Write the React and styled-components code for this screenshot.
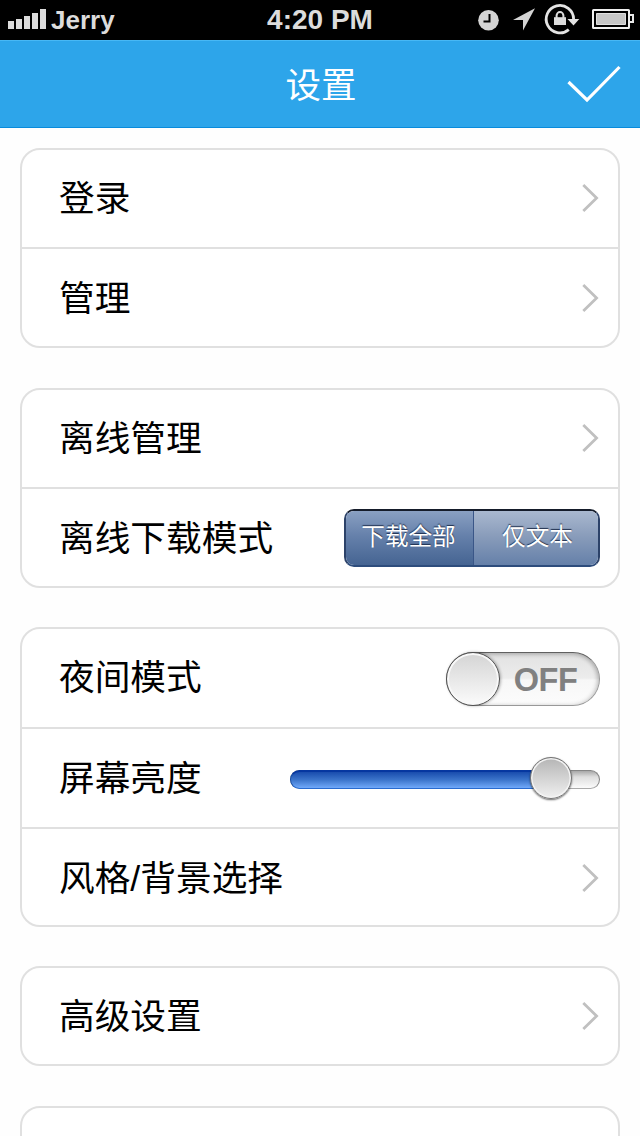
import { useState } from 'react';
import styled, { createGlobalStyle, css } from 'styled-components';

const GlobalStyle = createGlobalStyle`
  * {
    box-sizing: border-box;
  }

  body {
    margin: 0;
    background: #fefefe;
    overflow: hidden;
    font-family: 'Liberation Sans', 'Noto Sans CJK SC', sans-serif;
  }

  button {
    font-family: inherit;
  }
`;

const Screen = styled.div`
  width: 640px;
  height: 1136px;
  overflow: hidden;
  display: flex;
  flex-direction: column;
`;

const StatusBar = styled.div`
  flex: none;
  height: 40px;
  padding: 0 6px 0 8px;
  display: grid;
  grid-template-columns: 1fr auto 1fr;
  align-items: center;
  background: #000;
  color: #dcdcdc;
  font-size: 28px;
  font-weight: 700;
  line-height: 40px;
`;

const Carrier = styled.div`
  display: flex;
  align-items: center;
  gap: 5px;
  font-size: 26px;
`;

const Clock = styled.span`
  margin-left: -2px;
`;

const StatusIcons = styled.div`
  display: flex;
  justify-content: flex-end;
  height: 40px;
`;

const NavBar = styled.header`
  flex: none;
  height: 88px;
  padding: 0 19px 0 75px;
  display: flex;
  align-items: center;
  background: #2da5ea;
  border-top: 1px solid #47b8f5;
  border-bottom: 1px solid #088bdc;
`;

const NavTitle = styled.h1`
  flex: 1;
  margin: 0;
  padding-top: 4px;
  text-align: center;
  color: #fff;
  font-size: 35.5px;
  font-weight: 400;
  line-height: 48px;
`;

const IconButton = styled.button`
  display: flex;
  padding: 0;
  border: none;
  background: none;
  cursor: pointer;
`;

const Content = styled.main`
  flex: none;
  padding: 20px 20px 0;
  display: flex;
  flex-direction: column;
`;

const Card = styled.section`
  height: ${props => props.$rows * 100}px;
  margin-bottom: ${props => props.$gap || 40}px;
  border: 2px solid #e0e0e0;
  border-radius: 20px;
  background: #fff;
  display: flex;
  flex-direction: column;
`;

const Row = styled.div`
  flex: none;
  height: 100px;
  padding: 0 18px 0 37px;
  display: flex;
  align-items: center;
  justify-content: space-between;

  &:first-child {
    height: ${props => props.$firstHeight || 97}px;
    padding-bottom: 1px;
  }

  & + & {
    border-top: 2px solid #e0e0e0;
    padding-top: 1px;
  }

  & + & + & {
    padding-top: 2px;
  }

  &:last-child:not(:first-child) {
    flex: 1;
  }
`;

const Label = styled.span`
  padding-top: 1px;
  color: #000;
  font-size: 35.7px;
  line-height: 48px;
  white-space: nowrap;
`;

const Segments = styled.div`
  width: 256px;
  height: 58px;
  display: grid;
  grid-template-columns: 127px 1fr;
  border: 2px solid #2c4269;
  border-top-color: #151c2a;
  border-bottom-color: #2d4c7c;
  border-radius: 10px;
  overflow: hidden;
`;

const Segment = styled.button`
  padding: 0 2px 2px 0;
  border: none;
  color: #fff;
  font-size: 23.6px;
  line-height: 34px;
  text-shadow: 0 -1px 1px rgba(20, 35, 65, 0.9);
  background: linear-gradient(#a9b8cf, #8a9dbb 45%, #6580a9);
  cursor: pointer;

  & + & {
    padding: 0 0 2px 3px;
    border-left: 1px solid #8fa3c1;
  }

  ${props => props.$active && css`
    background: linear-gradient(#8aa0c2, #6681ab 45%, #456492);
    box-shadow: 1px 0 0 #3a5687;
    position: relative;
  `}
`;

const Toggle = styled.button`
  width: 154px;
  height: 54px;
  margin-top: 3px;
  padding: 0;
  display: flex;
  align-items: center;
  border: 1px solid #999;
  border-top-color: #606060;
  border-radius: 27px;
  background: linear-gradient(#e2e2e2, #ececec 48%, #f7f7f7 52%, #fcfcfc);
  box-shadow: inset 0 2px 4px rgba(0, 0, 0, 0.16), inset -2px 0 4px rgba(0, 0, 0, 0.14);
  cursor: pointer;
`;

const ToggleKnob = styled.span`
  flex: none;
  width: 54px;
  height: 54px;
  margin-left: -1px;
  border: 1px solid #505050;
  border-radius: 50%;
  background: linear-gradient(#d4d4d4, #fbfbfb);
  box-shadow: inset 0 0 0 2px #f8f8f8, 1px 0 3px rgba(0, 0, 0, 0.3);
`;

const ToggleText = styled.span`
  flex: 1;
  padding: 1px 8px 0 0;
  color: #808080;
  font-size: 32.5px;
  font-weight: 700;
  line-height: 52px;
  letter-spacing: -0.5px;
`;

const SliderTrack = styled.div`
  width: 310px;
  height: 19px;
  margin-top: 2px;
  display: flex;
  align-items: center;
  border: 1px solid #858585;
  border-bottom-color: #aaa;
  border-radius: 10px;
  background: linear-gradient(#a8a8a8, #dedede 35%, #fbfbfb);
`;

const SliderFill = styled.div`
  flex: none;
  height: 19px;
  margin-left: -1px;
  border: 1px solid #154faa;
  border-top: 2px solid #0637a0;
  border-bottom-color: #286bd0;
  border-right: none;
  border-radius: 10px 0 0 10px;
  background: linear-gradient(#194cad, #3c75cb 50%, #70a9fa);
`;

const SliderKnob = styled.div`
  flex: none;
  width: 42px;
  height: 42px;
  margin: -3px 0 0 -21px;
  border: 1px solid #747474;
  border-radius: 50%;
  background: linear-gradient(#b5b5b5, #f0f0f0);
  box-shadow: inset 0 0 0 1.5px #f3f3f3, 0 1px 2px rgba(0, 0, 0, 0.6);
`;

const SignalIcon = () => (
  <svg width="38" height="40" fill="#dcdcdc">
    <path d="M0 21h6v8H0zM8 19h6v10H8zM16 16h6v13h-6zM24 13h6v16h-6zM32 9h6v20h-6z" />
  </svg>
);

const SystemIcons = () => (
  <svg width="158" height="40" viewBox="476 0 158 40" fill="none">
    <circle cx="488.5" cy="20.3" r="10.3" fill="#d4d4d4" />
    <path d="M489.5 14v7.5h-6" stroke="#000" strokeWidth="2" />
    <path d="M535 8.3L513 20h10v10.5z" fill="#d4d4d4" />
    <path d="M568.8 29.6A13.7 13.7 0 1 1 573.6 19" stroke="#e4e4e4" strokeWidth="2.8" />
    <path d="M567.5 19h11.8l-5.8 6.5z" fill="#e4e4e4" />
    <path d="M554 17.2h12V25h-12z" fill="#dcdcdc" />
    <path d="M556.6 18v-2.5a3.4 3.4 0 0 1 6.8 0V18" stroke="#dcdcdc" strokeWidth="2" />
    <rect x="593" y="10" width="36" height="18" rx="0.5" stroke="#f0f0f0" strokeWidth="2" />
    <path d="M630 15h3v7h-3" stroke="#e8e8e8" strokeWidth="2" />
    <path d="M596.5 13.5h29v11h-29z" fill="#c6c6c6" stroke="#e0e0e0" />
  </svg>
);

const CheckIcon = () => (
  <svg width="54" height="38" viewBox="0 0 54 38" fill="none">
    <path d="M1.5 17L20 35L52.5 2" stroke="#fff" strokeWidth="3.2" />
  </svg>
);

const Chevron = () => (
  <svg width="20" height="30" viewBox="0 0 20 30" fill="none">
    <path d="M3.3 2L16.6 15L3.3 28" stroke="#c0c0c0" strokeWidth="2.8" />
  </svg>
);

const LinkRow = ({ label, firstHeight }) => (
  <Row $firstHeight={firstHeight}>
    <Label>{label}</Label>
    <Chevron />
  </Row>
);

const downloadModes = ['下载全部', '仅文本'];

export default function App() {
  const [mode, setMode] = useState(0);
  const [night, setNight] = useState(false);
  const brightness = 261;

  return (
    <Screen>
      <GlobalStyle />
      <StatusBar>
        <Carrier>
          <SignalIcon />
          Jerry
        </Carrier>
        <Clock>4:20 PM</Clock>
        <StatusIcons>
          <SystemIcons />
        </StatusIcons>
      </StatusBar>
      <NavBar>
        <NavTitle>设置</NavTitle>
        <IconButton>
          <CheckIcon />
        </IconButton>
      </NavBar>
      <Content>
        <Card $rows={2}>
          <LinkRow label="登录" />
          <LinkRow label="管理" />
        </Card>
        <Card $rows={2} $gap={39}>
          <LinkRow label="离线管理" />
          <Row>
            <Label>离线下载模式</Label>
            <Segments>
              {downloadModes.map((text, index) => (
                <Segment key={text} $active={mode === index} onClick={() => setMode(index)}>
                  {text}
                </Segment>
              ))}
            </Segments>
          </Row>
        </Card>
        <Card $rows={3} $gap={39}>
          <Row $firstHeight={98}>
            <Label>夜间模式</Label>
            <Toggle onClick={() => setNight(!night)}>
              <ToggleKnob />
              <ToggleText>{night ? 'ON' : 'OFF'}</ToggleText>
            </Toggle>
          </Row>
          <Row>
            <Label>屏幕亮度</Label>
            <SliderTrack>
              <SliderFill style={{ width: brightness }} />
              <SliderKnob />
            </SliderTrack>
          </Row>
          <LinkRow label="风格/背景选择" />
        </Card>
        <Card $rows={1}>
          <LinkRow label="高级设置" />
        </Card>
        <Card $rows={1} />
      </Content>
    </Screen>
  );
}
